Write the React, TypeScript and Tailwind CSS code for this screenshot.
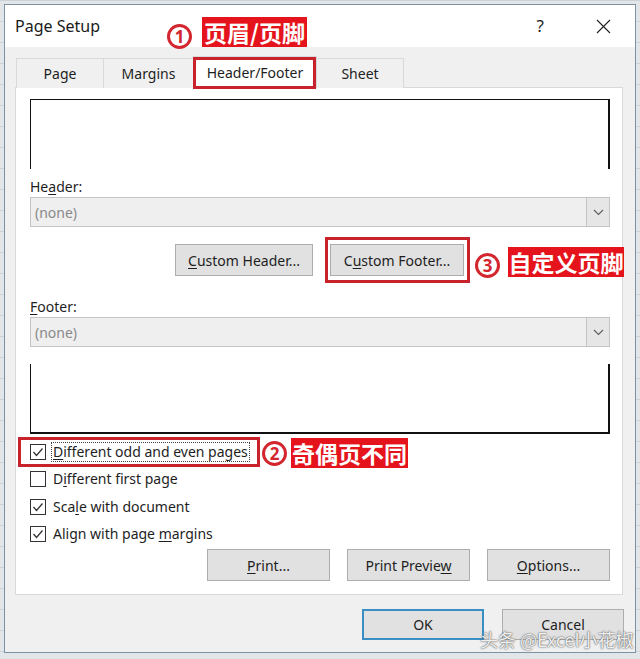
import React from "react";

const ui = "font-['Noto_Sans',sans-serif]";
const cjk = "font-['Noto_Sans_CJK_SC',sans-serif]";

function Btn({ children, w = "w-[123px]" }: { children: React.ReactNode; w?: string }) {
  return (
    <div
      className={`${w} h-[32px] flex items-center justify-center border border-[#adadad] bg-[#e1e1e1] text-[14px] text-[#1e1e1e]`}
    >
      {children}
    </div>
  );
}

function Combo() {
  return (
    <div className="flex h-[30px] border border-[#c4c4c4] bg-[#efefef]">
      <div className="flex-1 flex items-center pl-[4px] text-[14px] text-[#8a8a8a]">(none)</div>
      <div className="w-[23px] flex items-center justify-center border-l border-[#c4c4c4] bg-[#e6e6e6]">
        <svg width="11" height="7" viewBox="0 0 11 7">
          <polyline points="1,1 5.5,5.5 10,1" fill="none" stroke="#606060" strokeWidth="1.2" />
        </svg>
      </div>
    </div>
  );
}

function Check({ checked, children, focus }: { checked: boolean; children: React.ReactNode; focus?: boolean }) {
  return (
    <div className="h-[27.5px] flex items-center">
      <div className="w-[16px] h-[16px] border border-[#333] bg-white flex items-center justify-center">
        {checked && (
          <svg width="14" height="14" viewBox="0 0 14 14">
            <polyline points="2.5,7 5.5,10.5 11.5,3.5" fill="none" stroke="#333" strokeWidth="1.3" />
          </svg>
        )}
      </div>
      <div
        className={`ml-[5px] px-[1px] text-[14px] text-[#1e1e1e] leading-[18px] ${focus ? "border border-dotted border-[#444]" : "border border-transparent"}`}
      >
        {children}
      </div>
    </div>
  );
}

function Tab({ label, w, active }: { label: string; w: string; active?: boolean }) {
  return (
    <div
      className={`${w} -ml-px flex items-center justify-center border border-b-0 border-[#d9d9d9] text-[14px] text-[#1e1e1e] ${
        active ? "h-[32px] bg-white relative z-10" : "h-[30px] bg-[#f0f0f0]"
      }`}
    >
      {label}
    </div>
  );
}

function Circle({ n, className }: { n: string; className: string }) {
  return (
    <div
      className={`absolute w-[25px] h-[25px] rounded-full border-[3px] border-[#d3262f] flex items-center justify-center text-[17px] leading-none font-bold text-[#d3262f] ${ui} ${className}`}
    >
      {n}
    </div>
  );
}

function Tag({ text, className }: { text: string; className: string }) {
  return (
    <div
      className={`absolute h-[30px] bg-[#e5141c] flex items-center justify-center text-white text-[23px] font-bold leading-none ${cjk} ${className}`}
    >
      {text}
    </div>
  );
}

export default function App() {
  return (
    <div
      className={`relative w-[640px] h-[659px] overflow-hidden pt-[4px] pl-[4px] bg-[#e2e6e9] bg-[repeating-linear-gradient(to_bottom,#cdd2d6_0px,#cdd2d6_1px,transparent_1px,transparent_21px)] ${ui}`}
    >
      <div className="w-[632px] h-[649px] flex flex-col border border-[#7b92a5] bg-[#f0f0f0]">
        {/* title bar */}
        <div className="h-[42px] bg-white flex items-center pl-[10px] pr-[24px]">
          <span className="text-[16px] text-[#1a1a1a]">Page Setup</span>
          <span className="ml-auto text-[17px] text-[#222]">?</span>
          <svg className="ml-[52px]" width="15" height="15" viewBox="0 0 15 15">
            <path d="M1 1 L14 14 M14 1 L1 14" stroke="#222" strokeWidth="1.1" />
          </svg>
        </div>

        <div className="flex-1 px-[10px] pt-[11px]">
          {/* tabs */}
          <div className="flex items-end pl-[2px] -mb-px h-[30px]">
            <Tab label="Page" w="w-[88px]" />
            <Tab label="Margins" w="w-[91px]" />
            <Tab label="Header/Footer" w="w-[124px]" active />
            <Tab label="Sheet" w="w-[88px]" />
          </div>

          {/* panel */}
          <div className="w-[608px] h-[508px] border border-[#d9d9d9] bg-white pl-[14px] pr-[12px] pt-[11px]">
            <div className="h-[70px] border-t border-l border-r-2 border-[#111]" />
            <div className="mt-[7px] h-[20px] flex items-center text-[14px] text-[#1e1e1e]">
              <span>
                He<u className="underline-offset-2">a</u>der:
              </span>
            </div>
            <div className="mt-[1px]">
              <Combo />
            </div>
            <div className="mt-[17px] flex pl-[145px] gap-[17px]">
              <Btn w="w-[138px]">
                <span>
                  <u className="underline-offset-2">C</u>ustom Header...
                </span>
              </Btn>
              <Btn w="w-[134px]">
                <span>
                  C<u className="underline-offset-2">u</u>stom Footer...
                </span>
              </Btn>
            </div>
            <div className="mt-[20px] h-[20px] flex items-center text-[14px] text-[#1e1e1e]">
              <span>
                <u className="underline-offset-2">F</u>ooter:
              </span>
            </div>
            <div className="mt-[1px]">
              <Combo />
            </div>
            <div className="mt-[17px] h-[70px] border-l border-b-2 border-r-2 border-[#111]" />

            <div className="mt-[4px]">
              <Check checked focus>
                <u className="underline-offset-2">D</u>ifferent odd and even pages
              </Check>
              <Check checked={false}>
                D<u className="underline-offset-2">i</u>fferent first page
              </Check>
              <Check checked>
                Sca<u className="underline-offset-2">l</u>e with document
              </Check>
              <Check checked>
                Align with page <u className="underline-offset-2">m</u>argins
              </Check>
            </div>

            <div className="mt-[1px] flex justify-end gap-[17px]">
              <Btn>
                <span>
                  <u className="underline-offset-2">P</u>rint...
                </span>
              </Btn>
              <Btn>
                <span>
                  Print Previe<u className="underline-offset-2">w</u>
                </span>
              </Btn>
              <Btn>
                <span>
                  <u className="underline-offset-2">O</u>ptions...
                </span>
              </Btn>
            </div>
          </div>

          {/* OK / Cancel */}
          <div className="mt-[14px] flex justify-end gap-[18px] pr-[1px]">
            <div className="w-[122px] h-[31px] flex items-center justify-center border-2 border-[#3a8ec3] bg-[#e1e1e1] text-[14px] text-[#1e1e1e]">
              OK
            </div>
            <div className="w-[122px] h-[31px] flex items-center justify-center border border-[#adadad] bg-[#e1e1e1] text-[14px] text-[#1e1e1e]">
              Cancel
            </div>
          </div>
        </div>
      </div>

      {/* annotations */}
      <div className="absolute left-[193px] top-[57px] w-[123px] h-[32px] border-[3px] border-[#c8232c] z-20" />
      <Circle n="1" className="left-[167px] top-[24px]" />
      <Tag text="页眉/页脚" className="left-[202px] top-[17px] w-[105px]" />

      <div className="absolute left-[325px] top-[237px] w-[145px] h-[46px] border-[3px] border-[#c8232c]" />
      <Circle n="3" className="left-[475px] top-[253px]" />
      <Tag text="自定义页脚" className="left-[508px] top-[247px] w-[116px]" />

      <div className="absolute left-[18px] top-[437px] w-[242px] h-[30px] border-[3px] border-[#c8232c]" />
      <Circle n="2" className="left-[262px] top-[441px]" />
      <Tag text="奇偶页不同" className="left-[291px] top-[438px] w-[117px]" />

      <div
        className={`absolute left-[480px] top-[626px] text-[18px] text-white/90 ${cjk} [text-shadow:0_0_1px_#555,0_0_2px_#666]`}
      >
        头条 @Excel小花椒
      </div>
    </div>
  );
}
